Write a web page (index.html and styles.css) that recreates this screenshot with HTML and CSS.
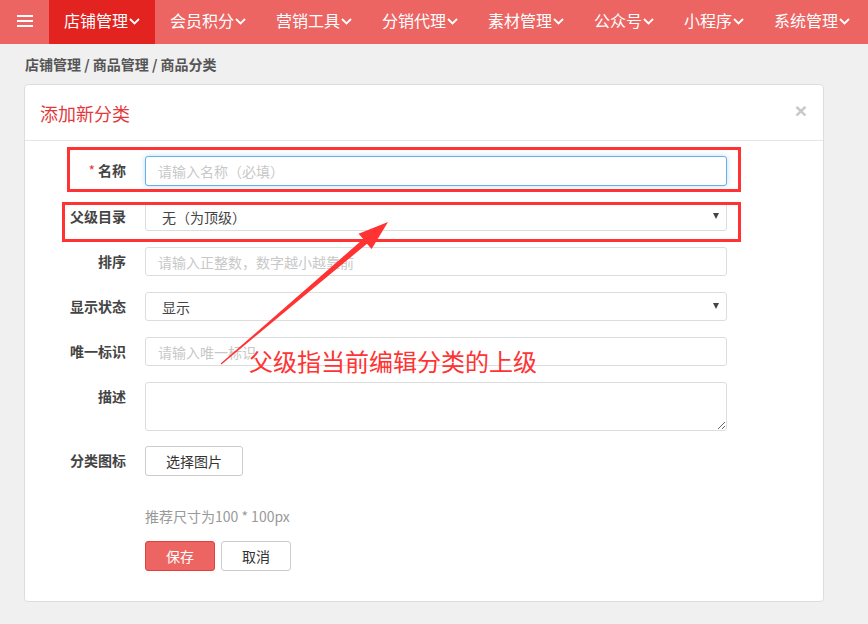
FILE: index.html
```html
<!DOCTYPE html>
<html lang="zh-CN">
<head>
<meta charset="utf-8">
<title>添加新分类</title>
<link rel="stylesheet" href="styles.css">
</head>
<body>
<nav class="topnav">
  <div class="menu-toggle">
    <svg width="16" height="12" viewBox="0 0 16 12"><rect x="0" y="0" width="16" height="2" fill="#fff"/><rect x="0" y="5" width="16" height="2" fill="#fff"/><rect x="0" y="10" width="16" height="2" fill="#fff"/></svg>
  </div>
  <div class="nav-item active">店铺管理<svg class="chev" width="11" height="7" viewBox="0 0 11 7"><path d="M1 1l4.5 4.5L10 1" fill="none" stroke="#fff" stroke-width="1.8"/></svg></div>
  <div class="nav-item">会员积分<svg class="chev" width="11" height="7" viewBox="0 0 11 7"><path d="M1 1l4.5 4.5L10 1" fill="none" stroke="#fff" stroke-width="1.8"/></svg></div>
  <div class="nav-item">营销工具<svg class="chev" width="11" height="7" viewBox="0 0 11 7"><path d="M1 1l4.5 4.5L10 1" fill="none" stroke="#fff" stroke-width="1.8"/></svg></div>
  <div class="nav-item">分销代理<svg class="chev" width="11" height="7" viewBox="0 0 11 7"><path d="M1 1l4.5 4.5L10 1" fill="none" stroke="#fff" stroke-width="1.8"/></svg></div>
  <div class="nav-item">素材管理<svg class="chev" width="11" height="7" viewBox="0 0 11 7"><path d="M1 1l4.5 4.5L10 1" fill="none" stroke="#fff" stroke-width="1.8"/></svg></div>
  <div class="nav-item">公众号<svg class="chev" width="11" height="7" viewBox="0 0 11 7"><path d="M1 1l4.5 4.5L10 1" fill="none" stroke="#fff" stroke-width="1.8"/></svg></div>
  <div class="nav-item">小程序<svg class="chev" width="11" height="7" viewBox="0 0 11 7"><path d="M1 1l4.5 4.5L10 1" fill="none" stroke="#fff" stroke-width="1.8"/></svg></div>
  <div class="nav-item">系统管理<svg class="chev" width="11" height="7" viewBox="0 0 11 7"><path d="M1 1l4.5 4.5L10 1" fill="none" stroke="#fff" stroke-width="1.8"/></svg></div>
</nav>

<div class="breadcrumb">店铺管理 / 商品管理 / 商品分类</div>

<div class="card">
  <div class="card-header">
    <h3 class="card-title">添加新分类</h3>
    <span class="close">×</span>
  </div>
  <form class="form">
    <div class="row">
      <label class="label"><span class="req">*</span>名称</label>
      <input class="field focus" type="text" placeholder="请输入名称（必填）">
    </div>
    <div class="row">
      <label class="label">父级目录</label>
      <div class="select-wrap"><select class="field sel"><option>无（为顶级）</option></select></div>
    </div>
    <div class="row">
      <label class="label">排序</label>
      <input class="field" type="text" placeholder="请输入正整数，数字越小越靠前">
    </div>
    <div class="row">
      <label class="label">显示状态</label>
      <div class="select-wrap"><select class="field sel"><option>显示</option></select></div>
    </div>
    <div class="row">
      <label class="label">唯一标识</label>
      <input class="field" type="text" placeholder="请输入唯一标识">
    </div>
    <div class="row row-area">
      <label class="label">描述</label>
      <textarea class="field area"></textarea>
    </div>
    <div class="row">
      <label class="label">分类图标</label>
      <button type="button" class="btn btn-default btn-pick">选择图片</button>
    </div>
    <div class="hint">推荐尺寸为100 * 100px</div>
    <div class="actions">
      <button type="button" class="btn btn-primary">保存</button>
      <button type="button" class="btn btn-default">取消</button>
    </div>
  </form>
</div>

<svg class="annot" width="868" height="624" viewBox="0 0 868 624">
  <rect x="68.5" y="148.5" width="671" height="42" fill="none" stroke="#f33" stroke-width="3"/>
  <rect x="63.5" y="203.5" width="676" height="37" fill="none" stroke="#f33" stroke-width="3"/>
  <polygon points="221.4,364.4 367.0,243.7 371.6,249.0 388,222 358.6,233.8 363.2,239.1 220.6,363.6" fill="#f33"/>
</svg>
<div class="annot-text">父级指当前编辑分类的上级</div>
</body>
</html>
```
FILE: styles.css
```css
* { box-sizing: border-box; }
html, body { margin: 0; padding: 0; }
body {
  background: #f0f0f0;
  font-family: "Noto Sans CJK SC", "Liberation Sans", sans-serif;
  color: #333;
  width: 868px;
  height: 624px;
  position: relative;
  overflow: hidden;
}
.topnav {
  display: flex;
  height: 44px;
  background: #ec6563;
}
.menu-toggle {
  width: 49px;
  flex-shrink: 0;
  display: flex;
  align-items: center;
  justify-content: center;
  padding-bottom: 2px;
}
.nav-item {
  flex-shrink: 0;
  display: flex;
  align-items: center;
  padding: 0 15px 4px;
  color: #fff;
  font-size: 16px;
  white-space: nowrap;
}
.nav-item.active { background: #e2231f; }
.nav-item .chev { margin-left: 1px; margin-top: 2px; }

.breadcrumb {
  padding: 10px 25px 0;
  height: 40px;
  font-size: 14px;
  font-weight: bold;
  color: #555;
  line-height: 20px;
}

.card {
  margin-left: 24px;
  width: 800px;
  background: #fff;
  border: 1px solid #ddd;
  border-radius: 4px;
  height: 518px;
}
.card-header {
  height: 56px;
  border-bottom: 1px solid #e5e5e5;
  display: flex;
  align-items: center;
  justify-content: space-between;
  padding: 0 15px 4px;
}
.card-title {
  margin: 0;
  font-size: 18px;
  font-weight: normal;
  color: #e4393c;
  margin-top: 4px;
}
.close {
  font-family: "Liberation Sans", sans-serif;
  font-size: 21px;
  font-weight: bold;
  color: #c8c8c8;
  line-height: 1;
  margin-right: 1px;
}

.form { padding: 15px 0 0; }
.row {
  display: flex;
  align-items: flex-start;
  margin-bottom: 16px;
}
.row.row-area { margin-bottom: 15px; }
.label {
  width: 120px;
  padding-right: 19px;
  text-align: right;
  font-size: 14px;
  font-weight: bold;
  color: #444;
  line-height: 29px;
}
.req { color: #e4393c; margin-right: 3px; font-weight: normal; }
.field {
  width: 582px;
  height: 29px;
  border: 1px solid #ddd;
  border-radius: 3px;
  padding: 0 12px;
  font-family: inherit;
  font-size: 14px;
  color: #555;
  background: #fff;
  outline: none;
}
.field::placeholder { color: #c8c8c8; }
.field.focus {
  border-color: #66afe9;
  box-shadow: 0 0 5px rgba(102, 175, 233, 0.45);
  height: 30px;
}
.select-wrap { position: relative; }
.select-wrap::after {
  content: "";
  position: absolute;
  right: 8px;
  top: 11px;
  border-left: 3.5px solid transparent;
  border-right: 3.5px solid transparent;
  border-top: 6px solid #444;
}
.sel {
  appearance: none;
  -webkit-appearance: none;
  padding-left: 16px;
  color: #444;
}
.area {
  height: 49px;
  padding: 6px 12px;
  resize: vertical;
}
.btn {
  height: 30px;
  border-radius: 3px;
  font-family: inherit;
  font-size: 14px;
  cursor: pointer;
  padding: 0;
}
.btn-default {
  background: #fff;
  border: 1px solid #ccc;
  color: #333;
  width: 70px;
}
.btn-pick { width: 98px; }
.btn-primary {
  background: #ec6563;
  border: 1px solid #e2403d;
  color: #fff;
  width: 70px;
}
.hint {
  margin: 30px 0 0 120px;
  font-size: 14px;
  color: #999;
  line-height: 20px;
}
.actions {
  margin: 15px 0 0 120px;
  display: flex;
  gap: 6px;
}

.annot {
  position: absolute;
  top: 0;
  left: 0;
  pointer-events: none;
}
.annot-text {
  position: absolute;
  left: 249px;
  top: 345px;
  font-size: 24px;
  line-height: 32px;
  color: #f33;
  white-space: nowrap;
  pointer-events: none;
}
```
